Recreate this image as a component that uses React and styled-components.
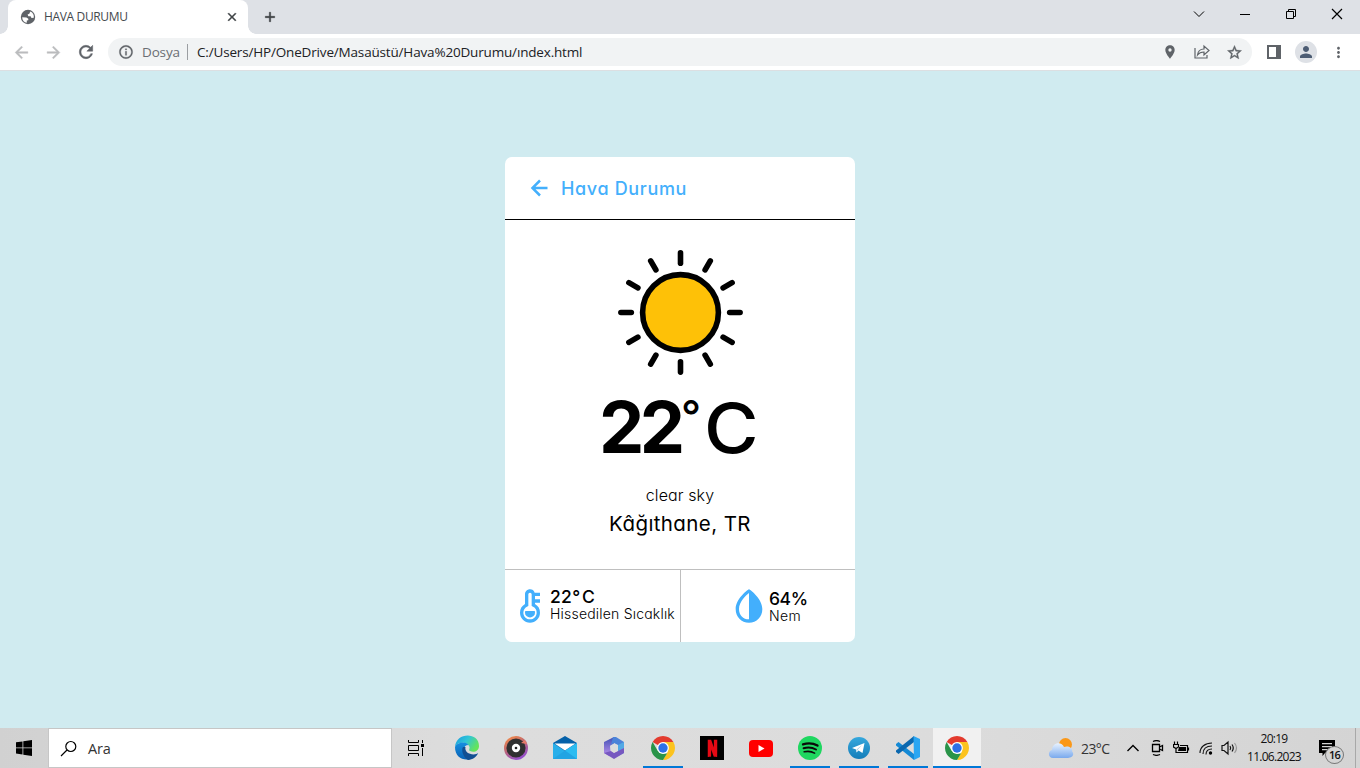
import React from "react";
import styled, { createGlobalStyle } from "styled-components";
import {
  MdArrowBack, MdArrowForward, MdRefresh, MdInfoOutline, MdLocationOn,
  MdStarBorder, MdPerson, MdMoreVert, MdClose, MdAdd,
} from "react-icons/md";
import { BiLeftArrowAlt, BiSolidThermometer, BiSolidDropletHalf } from "react-icons/bi";
import { RiNetflixFill } from "react-icons/ri";

const Global = createGlobalStyle`
  * { box-sizing: border-box; }
  body { margin: 0; font-family: "Open Sans", "Noto Sans", sans-serif; }
  svg { display: block; flex: none; }
  path[fill="none"] { stroke: none; }
`;

const Screen = styled.div`
  width: 1360px;
  height: 768px;
  display: flex;
  flex-direction: column;
  overflow: hidden;
  background: #d0ebf0;
`;

/* Browser frame */
const TabStrip = styled.header`
  height: 34px;
  flex: none;
  display: flex;
  background: #dee1e6;
  padding-left: 8px;
`;
const Tab = styled.div`
  position: relative;
  width: 240px;
  display: flex;
  align-items: center;
  padding: 0 9px 0 12px;
  background: #fff;
  border-radius: 8px 8px 0 0;
  color: #5f6368;
  &::before, &::after {
    content: "";
    position: absolute;
    bottom: 0;
    width: 8px;
    height: 8px;
  }
  &::before { left: -8px; background: radial-gradient(circle at 0 0, transparent 7.5px, #fff 8px); }
  &::after { right: -8px; background: radial-gradient(circle at 100% 0, transparent 7.5px, #fff 8px); }
`;
const TabTitle = styled.span`
  flex: 1;
  margin-left: 8px;
  font-size: 12px;
  line-height: 16px;
  letter-spacing: -0.35px;
  color: #45494d;
`;
const NewTab = styled.div`
  margin: 9px 0 0 14px;
  color: #3c4043;
  svg { stroke: currentColor; stroke-width: 0.8; }
`;
const WindowButtons = styled.div`
  margin-left: auto;
  display: flex;
  height: 28px;
`;
const WindowButton = styled.div`
  width: 46px;
  display: grid;
  place-items: center;
`;
const Toolbar = styled.div`
  height: 37px;
  flex: none;
  display: flex;
  align-items: center;
  padding: 0 13px 0 12px;
  background: #fff;
  border-bottom: 1px solid #dcdfe2;
`;
const NavButton = styled.div`
  width: 32px;
  color: ${(p) => (p.$off ? "#babcbe" : "#5f6368")};
  svg { stroke: currentColor; stroke-width: 0.6; }
`;
const AddressBar = styled.div`
  flex: 1;
  height: 28px;
  margin-right: 14px;
  padding: 0 9px 0 10px;
  border-radius: 14px;
  background: #f1f3f4;
  color: #5f6368;
  display: flex;
  align-items: center;
  font-size: 14px;
`;
const Scheme = styled.span`
  margin-left: 8px;
  width: 45px;
  font-size: 13.5px;
  letter-spacing: -0.15px;
  color: #6a6e73;
`;
const Divider = styled.i`
  width: 1px;
  height: 16px;
  margin-right: 9px;
  background: #9b9ea2;
`;
const Url = styled.span`
  flex: 1;
  font-size: 13.5px;
  letter-spacing: -0.17px;
  color: #202124;
`;
const BarIcons = styled.div`
  display: flex;
  gap: 16px;
`;
const Avatar = styled.div`
  width: 22px;
  height: 22px;
  margin: 0 13px 0 13px;
  border-radius: 50%;
  display: grid;
  place-items: center;
  background: #dee1e6;
  color: #4c5c73;
`;

/* Weather card */
const Page = styled.main`
  flex: 1;
  display: flex;
  justify-content: center;
  align-items: flex-start;
  padding-top: 86px;
  font-family: "Inter", "Noto Sans", sans-serif;
  font-feature-settings: "cv11";
  color: #000;
`;
const Card = styled.section`
  width: 350px;
  height: 485px;
  background: #fff;
  border-radius: 7px;
  display: flex;
  flex-direction: column;
  overflow: hidden;
`;
const CardHeader = styled.h1`
  margin: 0;
  height: 63px;
  display: flex;
  align-items: center;
  padding-left: 20px;
  border-bottom: 1px solid #000;
  color: #43affc;
  font-size: 18px;
  font-weight: 500;
  letter-spacing: 0.65px;
`;
const HeaderTitle = styled.span`
  margin-left: 6px;
`;
const Weather = styled.div`
  flex: 1;
  display: flex;
  flex-direction: column;
  align-items: center;
  padding-top: 30px;
`;
const SunBox = styled.div`
  padding-left: 1px;
`;
const Temperature = styled.div`
  display: flex;
  height: 80px;
  margin-top: 12px;
  font-size: 72px;
  line-height: 80px;
  font-weight: 500;
`;
const Amount = styled.span`
  width: 82px;
  margin-left: -3px;
  font-size: 72px;
  font-weight: 650;
  letter-spacing: -4.5px;
`;
const Degree = styled.span`
  width: 23px;
  font-size: 44px;
  line-height: 58px;
`;
const Unit = styled.span`
  width: 54px;
  font-size: 69px;
  line-height: 82px;
  font-weight: 500;
  transform: scaleX(1.08);
  transform-origin: left;
`;
const Condition = styled.div`
  margin-top: 16px;
  font-size: 16px;
  line-height: 24px;
  letter-spacing: 0.1px;
  font-weight: 350;
`;
const Place = styled.div`
  margin-top: 2px;
  font-size: 20.5px;
  line-height: 30px;
  letter-spacing: 0.4px;
  font-weight: 370;
`;
const Details = styled.div`
  height: 73px;
  display: flex;
  border-top: 1px solid #bfbfbf;
`;
const Detail = styled.div`
  width: ${(p) => p.$w}px;
  display: flex;
  align-items: center;
  padding-left: ${(p) => p.$pad}px;
  border-right: ${(p) => (p.$line ? "1px solid #bfbfbf" : "0")};
  color: #43affc;
`;
const DetailText = styled.div`
  margin-left: ${(p) => p.$gap}px;
  margin-top: ${(p) => p.$drop || 0}px;
  color: #000;
  white-space: nowrap;
`;
const Value = styled.div`
  font-size: 17.5px;
  font-weight: 450;
  line-height: 18px;
  letter-spacing: ${(p) => p.$ls || 0}px;
`;
const SmallDegree = styled.span`
  margin-right: 1.5px;
`;
const Label = styled.div`
  font-size: 14px;
  font-weight: 300;
  line-height: 16px;
  letter-spacing: ${(p) => p.$ls || 0}px;
`;

/* Taskbar */
const Taskbar = styled.footer`
  height: 40px;
  flex: none;
  display: flex;
  background: linear-gradient(90deg, #d1d1d1, #dddddd 35%, #dcdcdc 70%, #d4d4d4);
`;
const Start = styled.div`
  width: 48px;
  display: grid;
  place-items: center;
`;
const Search = styled.div`
  width: 344px;
  height: 40px;
  display: flex;
  align-items: center;
  gap: 11px;
  padding-left: 11px;
  background: #fff;
  border: 1px solid #c6c6c6;
  font-size: 14.5px;
  letter-spacing: -0.2px;
  color: #333;
`;
const Apps = styled.div`
  display: flex;
  gap: 1px;
`;
const AppSlot = styled.div`
  width: 48px;
  height: 40px;
  display: grid;
  place-items: center;
  background: ${(p) => (p.$active ? "#f1f1f1" : "transparent")};
  background-image: ${(p) => (p.$open ? "linear-gradient(#0078d7, #0078d7)" : "none")};
  background-size: ${(p) => (p.$active ? "48px" : "40px")} 2px;
  background-position: center bottom;
  background-repeat: no-repeat;
  &:first-child { margin-right: 2px; }
`;
const NetflixTile = styled.div`
  width: 24px;
  height: 24px;
  display: grid;
  place-items: center;
  background: #000;
  color: #e50914;
`;
const Tray = styled.div`
  margin-left: auto;
  display: flex;
  align-items: center;
  color: #111;
`;
const Outside = styled.span`
  width: 45px;
  margin-left: 7px;
  font-size: 14px;
  letter-spacing: -0.6px;
  color: #333;
`;
const TrayIcons = styled.div`
  display: flex;
  gap: 8.5px;
  align-items: center;
`;
const Clock = styled.div`
  width: 64px;
  margin-left: 3px;
  font-size: 12px;
  line-height: 18px;
  letter-spacing: -0.72px;
  text-align: center;
  white-space: nowrap;
`;
const Notice = styled.div`
  position: relative;
  width: 24px;
  height: 40px;
  margin-left: 13px;
  padding-top: 12px;
`;
const Count = styled.span`
  position: absolute;
  left: 6px;
  top: 18px;
  width: 19px;
  height: 18px;
  border: 1px solid #777;
  border-radius: 50%;
  background: #d5d5d5;
  font-size: 11px;
  font-weight: 600;
  line-height: 16px;
  letter-spacing: -0.7px;
  text-align: center;
`;
const Peek = styled.i`
  width: 5px;
  height: 40px;
  margin-left: 12px;
  border-left: 1px solid #a8a8a8;
`;

const Line = ({ d, size = 12, w = 1, color = "#000" }) => (
  <svg width={size} height={size} viewBox={`0 0 ${size} ${size}`} fill="none" stroke={color} strokeWidth={w}>
    <path d={d} />
  </svg>
);

const Sun = () => (
  <svg width="125" height="125" viewBox="-62.5 -62.5 125 125">
    <circle r="37.900" fill="#fec107" stroke="#000" strokeWidth="5.600" />
    <g stroke="#000" strokeWidth="5.600" strokeLinecap="round">
      {[...Array(12)].map((_, i) => (
        <path key={i} d="M0-49.200V-59.600" transform={`rotate(${i * 30})`} />
      ))}
    </g>
  </svg>
);

const Globe = () => (
  <svg width="16" height="16" viewBox="0 0 16 16">
    <circle cx="8" cy="8" r="7.200" fill="#5f6368" />
    <path d="M2.200 8.200L6.500 8.400L8.300 9.800V11.200L6.800 11.600V13.800C4 13.400 2.100 11 2.200 8.200ZM10.300 2.600C13 3.700 14.200 6.200 13.800 8.800L11.500 8.900L10.600 7.300H8.300L7.600 5.400L9.300 4.700Z" fill="#fff" />
  </svg>
);

const ShareIcon = () => (
  <svg width="16" height="16" viewBox="0 0 16 16" fill="none" stroke="#5f6368" strokeWidth="1.2">
    <path d="M1 4V14H13V11M3.500 11C4 7 6 5 10 5V2L15 6.500L10 11V8C7 8 5 9 3.500 11Z" />
  </svg>
);

const Edge = () => (
  <svg width="26" height="26" viewBox="0 0 26 26">
    <defs>
      <linearGradient id="ed1" x1="0" y1="0" x2="1" y2=".5">
        <stop offset="0" stopColor="#1999df" /><stop offset=".5" stopColor="#30c5d8" /><stop offset="1" stopColor="#64e45b" />
      </linearGradient>
      <linearGradient id="ed2" x1="0" y1="0" x2="0" y2="1">
        <stop offset="0" stopColor="#168fe0" /><stop offset="1" stopColor="#0961b4" />
      </linearGradient>
    </defs>
    <path d="M1 12C2-3 25-3 25 11C25 16 20 18 16 16C14 15 16 14 15.500 12C14 7 4 6 1 12Z" fill="url(#ed1)" />
    <path d="M1 12C3 7 12 6 14.500 10C10 10 9 14 12 18C15 21 20 21 24 18C18 28 1 27 1 12Z" fill="url(#ed2)" />
    <path d="M9 12C7 15 9 22 14 25C19 24.500 22 22 24 18.500C18 21 10 18 11.500 12Z" fill="#124f92" />
  </svg>
);

const Record = () => (
  <svg width="26" height="26" viewBox="0 0 26 26">
    <defs><linearGradient id="rc" x1="0" y1="0" x2=".5" y2="1"><stop stopColor="#ff923e" /><stop offset=".5" stopColor="#bf6872" /><stop offset="1" stopColor="#9651c9" /></linearGradient></defs>
    <circle cx="13" cy="13" r="12" fill="url(#rc)" />
    <circle cx="13" cy="13" r="9.600" fill="#303030" />
    <path d="M18 8L22 5L24 9Z" fill="#e57c69" />
    <circle cx="13" cy="13" r="4.200" fill="#fff" /><circle cx="13" cy="13" r="1.300" fill="#222" />
  </svg>
);

const Mail = () => (
  <svg width="26" height="26" viewBox="0 0 26 26">
    <path d="M1 8L13 1L25 8V16H1Z" fill="#0561a9" />
    <path d="M1 8L13 16L25 8V24H1Z" fill="#28afea" />
    <path d="M2.500 8.500H23.500L13 15.500Z" fill="#fff" />
    <path d="M13 15.500L25 8V24Z" fill="#2bbcf1" />
    <path d="M13 15.500L1 24H25Z" fill="#138bd5" opacity=".3" />
  </svg>
);

const Office = () => (
  <svg width="22" height="24" viewBox="0 0 22 24">
    <defs><linearGradient id="of" x1="0" y1="0" x2="0" y2="1"><stop stopColor="#3f51b5" /><stop offset="1" stopColor="#bd91ed" /></linearGradient></defs>
    <path d="M11 1L1 6V17L6 20L8 16L7 10L11 8Z" fill="url(#of)" />
    <path d="M10 1L13 1L21 6V13L15 9L11 7L8 9Z" fill="#4b83d9" />
    <path d="M21 6V17L15 20V9Z" fill="#52a9e5" />
    <path d="M1 17L8 15L11 17L21 12V17L11 23Z" fill="#7758c0" />
    <path d="M7.500 9.500L11 7.500L15 9.500V14.500L11 16.500L7.500 14.500Z" fill="#ddd" />
  </svg>
);

const Chrome = () => (
  <svg width="24" height="24" viewBox="-12 -12 24 24">
    <path d="M0 0L-10.390-6A12 12 0 0 1 10.390-6Z" fill="#e33b2e" />
    <path d="M0-6H10.390A12 12 0 0 1 0 12L5.200 3Z" fill="#fcc31e" />
    <path d="M-10.390-6L-5.200 3L0 5.500H4L0 12A12 12 0 0 1-10.390-6Z" fill="#2a9449" />
    <circle r="5.900" fill="#fff" /><circle r="4.700" fill="#2d70e6" />
  </svg>
);

const YouTube = () => (
  <svg width="24" height="17" viewBox="0 0 24 17">
    <rect width="24" height="17" rx="4" fill="#f00" /><path d="M9.500 5L15.500 8.500L9.500 12Z" fill="#fff" />
  </svg>
);

const Spotify = () => (
  <svg width="24" height="24" viewBox="0 0 24 24" fill="none" stroke="#0a0a0a" strokeLinecap="round">
    <circle cx="12" cy="12" r="12" fill="#1ed760" stroke="none" />
    <path d="M5 8.300C10 6.800 15.500 7.300 19.500 9.600" strokeWidth="2.300" />
    <path d="M5.600 12.200C10 11 14.500 11.500 18 13.500" strokeWidth="2" />
    <path d="M6.200 15.800C10 14.900 13.500 15.300 16.600 17.100" strokeWidth="1.600" />
  </svg>
);

const Telegram = () => (
  <svg width="22" height="22" viewBox="0 0 22 22">
    <defs><linearGradient id="tg" x2="0" y2="1"><stop stopColor="#36a8dd" /><stop offset="1" stopColor="#147db9" /></linearGradient></defs>
    <circle cx="11" cy="11" r="11" fill="url(#tg)" />
    <path d="M4 11L16.500 6L14.500 16L10.500 13.500L8.500 15.500L8 12.500Z" fill="#fff" /><path d="M8.500 12.500L14 8L9.500 13L8.700 15Z" fill="#a8cde4" />
  </svg>
);

const Code = () => (
  <svg width="24" height="24" viewBox="0 0 24 24">
    <path d="M0 8L2.500 6L18 18V24L0 9.500Z" fill="#1489d5" />
    <path d="M0 16L2.500 18L18 6V0L0 14.500Z" fill="#0b68af" />
    <path d="M17.500 0L18 24L24 21V3Z" fill="#2aa6f2" />
  </svg>
);

const TaskView = () => (
  <svg width="18" height="16" viewBox="0 0 18 16" fill="none" stroke="#000" strokeWidth="1">
    <path d="M1.500 0V2.500H11.500V0M1.500 16V13.500H11.500V16M1.500 5.500H11.500V10.500H1.500ZM15.500 0V3M15.500 8V16" /><path d="M14 4H17V7H14Z" fill="#000" stroke="none" />
  </svg>
);

const CloudSun = () => (
  <svg width="26" height="22" viewBox="0 0 26 22">
    <defs><linearGradient id="cl" x2="0" y2="1"><stop stopColor="#e9f3ff" /><stop offset="1" stopColor="#79a9ed" /></linearGradient></defs>
    <circle cx="17.500" cy="7.500" r="6.500" fill="#fa9819" />
    <path d="M5 21C0 21-.5 14 4 13C4 5 14 4 16 10C21 8 25 12 24 14C27 18 24 21 20 21Z" fill="url(#cl)" />
  </svg>
);

const apps = [
  { icon: <TaskView /> },
  { icon: <Edge /> },
  { icon: <Record /> },
  { icon: <Mail /> },
  { icon: <Office /> },
  { icon: <Chrome />, open: true },
  { icon: <NetflixTile><RiNetflixFill size={19} /></NetflixTile> },
  { icon: <YouTube /> },
  { icon: <Spotify />, open: true },
  { icon: <Telegram />, open: true },
  { icon: <Code />, open: true },
  { icon: <Chrome />, open: true, active: true },
];

export default function App() {
  return (
    <Screen>
      <Global />
      <TabStrip>
        <Tab>
          <Globe />
          <TabTitle>HAVA DURUMU</TabTitle>
          <MdClose size={14} color="#3c4043" stroke="#3c4043" strokeWidth={0.8} />
        </Tab>
        <NewTab><MdAdd size={16} /></NewTab>
        <WindowButtons>
          <WindowButton><Line d="M1 3.500L6 8.500L11 3.500" /></WindowButton>
          <WindowButton><Line d="M1 6.500H11" /></WindowButton>
          <WindowButton><Line d="M1.500 3.500H8.500V10.500H1.500ZM3.500 3.500V1.500H10.500V8.500H8.500" /></WindowButton>
          <WindowButton><Line d="M1 1L11 11M11 1L1 11" w={1.2} /></WindowButton>
        </WindowButtons>
      </TabStrip>
      <Toolbar>
        <NavButton $off><MdArrowBack size={19} /></NavButton>
        <NavButton $off><MdArrowForward size={19} /></NavButton>
        <NavButton><MdRefresh size={20} /></NavButton>
        <AddressBar>
          <MdInfoOutline size={16} stroke="currentColor" strokeWidth={0.4} />
          <Scheme>Dosya</Scheme>
          <Divider />
          <Url>C:/Users/HP/OneDrive/Masaüstü/Hava%20Durumu/ındex.html</Url>
          <BarIcons>
            <MdLocationOn size={16} />
            <ShareIcon />
            <MdStarBorder size={17} stroke="currentColor" strokeWidth={0.5} />
          </BarIcons>
        </AddressBar>
        <svg width="16" height="14" viewBox="0 0 16 14"><path d="M1 0H15V14H1ZM3 2V12H10V2Z" fill="#5f6368" fillRule="evenodd" /></svg>
        <Avatar><MdPerson size={18} /></Avatar>
        <MdMoreVert size={17} color="#5f6368" />
      </Toolbar>
      <Page>
        <Card>
          <CardHeader>
            <BiLeftArrowAlt size={30} />
            <HeaderTitle>Hava Durumu</HeaderTitle>
          </CardHeader>
          <Weather>
            <SunBox><Sun /></SunBox>
            <Temperature>
              <Amount>22</Amount>
              <Degree>°</Degree>
              <Unit>C</Unit>
            </Temperature>
            <Condition>clear sky</Condition>
            <Place>Kâğıthane, TR</Place>
          </Weather>
          <Details>
            <Detail $w={176} $pad={5} $line>
              <BiSolidThermometer size={40} />
              <DetailText $gap={0} $drop={-3}>
                <Value $ls={0.3}>22<SmallDegree>°</SmallDegree>C</Value>
                <Label $ls={0.2}>Hissedilen Sıcaklık</Label>
              </DetailText>
            </Detail>
            <Detail $w={174} $pad={48}>
              <BiSolidDropletHalf size={40} />
              <DetailText $gap={0} $drop={1}>
                <Value $ls={-0.4}>64%</Value>
                <Label $ls={0.4}>Nem</Label>
              </DetailText>
            </Detail>
          </Details>
        </Card>
      </Page>
      <Taskbar>
        <Start>
          <svg width="16" height="16" viewBox="0 0 16 16"><path d="M0 2.300L6.500 1.400V7.500H0ZM7.300 1.200L16 0V7.500H7.300ZM0 8.300H6.500V14.500L0 13.600ZM7.300 8.300H16V16L7.300 14.700Z" /></svg>
        </Start>
        <Search>
          <Line size={17} w={1.2} d="M5.800 6.500A5 5 0 1 1 15.800 6.500A5 5 0 1 1 5.800 6.500M7 10L1 16" />
          Ara
        </Search>
        <Apps>
          {apps.map((a, i) => <AppSlot key={i} $open={a.open} $active={a.active}>{a.icon}</AppSlot>)}
        </Apps>
        <Tray>
          <CloudSun />
          <Outside>23°C</Outside>
          <TrayIcons>
            <Line size={14} w={1.4} d="M1.500 10L7 4.500L12.500 10" />
            <Line size={16} w={1.3} d="M3.500 4.500H10.500V11.500H3.500ZM10.500 7L13.500 5.500V10.500L10.500 9M4 1.500C6 .5 9 .5 11 1.500M4 14.500C6 15.500 9 15.500 11 14.500" />
            <svg width="17" height="16" viewBox="0 0 17 16" fill="none" stroke="#000" strokeWidth="1.200">
              <path d="M1.500 1.500V4M4.500 1.500V4M.5 4.500H5.500V7L3 8.500L.5 7ZM3 8V12.500H14.500V5.500H7M15.500 7.500V10.500" /><path d="M6 7H13V11H5Z" fill="#000" stroke="none" />
            </svg>
            <svg width="14" height="16" viewBox="0 0 14 16" fill="none" stroke="#111" strokeWidth="1.100">
              <path d="M1 13C1 7 6 3 13 3M4 14C4 9 7 6 13 6M7 14.500C7 11 9 9 13 9" /><circle cx="11.500" cy="13" r="1.700" fill="#000" stroke="none" />
            </svg>
            <svg width="18" height="16" viewBox="0 0 18 16" fill="none" stroke="#111" strokeWidth="1.200">
              <path d="M1 5.500H3L7 2V14L3 10.500H1ZM9 6Q10.500 8 9 10M11 4.500Q13.500 8 11 11.500" /><path d="M13.500 3Q17.500 8 13.500 13" stroke="#999" />
            </svg>
          </TrayIcons>
          <Clock>20:19<br />11.06.2023</Clock>
          <Notice>
            <svg width="16" height="16" viewBox="0 0 16 16"><path d="M0 0H16V13H6L3.500 16V13H0ZM3 3V4.200H13V3ZM3 6V7.200H13V6ZM3 9V10.200H10V9Z" fillRule="evenodd" /></svg>
            <Count>16</Count>
          </Notice>
          <Peek />
        </Tray>
      </Taskbar>
    </Screen>
  );
}
